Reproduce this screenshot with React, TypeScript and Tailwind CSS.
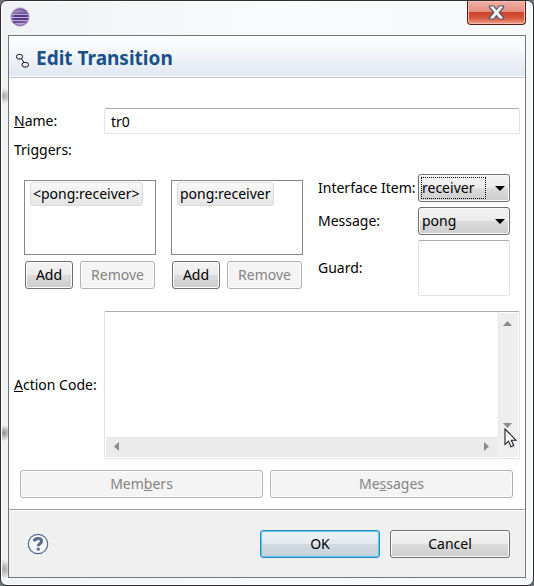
import type { ReactNode } from "react";

const raised =
  "h-7 rounded-[3px] border border-[#707070] bg-[linear-gradient(#f3f3f3,#ebebeb_50%,#dcdcdc_50%,#cdcdcd)] text-black shadow-[inset_0_0_0_1px_#fcfcfc]";
const disabledButton =
  "h-7 rounded-[3px] border border-[#adb2b5] bg-[#f4f4f4] text-[#838383] shadow-[inset_0_0_0_1px_#fcfcfc]";
const field =
  "rounded-[2px] border border-[#e2e3ea] border-t-[#abadb3] bg-white outline-none resize-none";

function TriggerList({ item, label }: { item: string; label: string }) {
  return (
    <div className="w-[132px] shrink-0 pt-1.5">
      <ul aria-label={label} className="h-[75px] border border-[#828790] bg-white px-[5px] py-px">
        <li className="inline-flex h-6 items-center rounded-[3px] border border-[#dcdcdc] bg-linear-to-b from-[#f8f8f8] to-[#e5e5e5] px-[2px] whitespace-nowrap">
          {item}
        </li>
      </ul>
      <div className="mt-1.5 flex justify-between px-px">
        <button type="button" className={`${raised} w-12`}>Add</button>
        <button type="button" disabled className={`${disabledButton} w-[75px]`}>Remove</button>
      </div>
    </div>
  );
}

function DropDown({ id, value, focused }: { id: string; value: string; focused?: boolean }) {
  return (
    <div className="relative">
      <select id={id} defaultValue={value} className={`${raised} block w-full appearance-none pl-[3px] outline-none`}>
        <option>{value}</option>
      </select>
      {focused && (
        <span className="pointer-events-none absolute top-[3px] bottom-[3px] left-[3px] right-6 border border-dotted border-black" />
      )}
      <svg className="pointer-events-none absolute top-3 right-[5px]" width="10" height="5" viewBox="0 0 10 5" aria-hidden="true">
        <path d="M0 0h10L5 5z" fill="#000" />
      </svg>
    </div>
  );
}

function ScrollArrow({ label, className, children }: { label: string; className: string; children: ReactNode }) {
  return (
    <button type="button" aria-label={label} className={`flex items-center justify-center ${className}`}>
      <svg width="9" height="9" viewBox="0 0 9 9" fill="#8b8b8b">{children}</svg>
    </button>
  );
}

function EclipseLogo() {
  return (
    <svg width="20" height="20" viewBox="0 0 20 20" aria-hidden="true">
      <defs>
        <linearGradient id="orb" x1="0" y1="0" x2="1" y2="1">
          <stop offset="0" stopColor="#a793c6" />
          <stop offset="0.5" stopColor="#66498f" />
          <stop offset="1" stopColor="#8f72b6" />
        </linearGradient>
      </defs>
      <circle cx="10" cy="10" r="9.3" fill="url(#orb)" stroke="#c9bddb" strokeWidth="0.7" />
      <path d="M2 5.5Q10 .5 18 5.5z" fill="#a791c4" opacity="0.7" />
      <path d="M2 7h16v1H2zM1 10h18v1H1zM2 13h16v1H2z" fill="#bfaed6" />
      <path d="M4 8h13v2H4zM3 11h15v2H3z" fill="#543a80" />
      <path d="M4 16Q10 20 16 16z" fill="#b6a1d0" />
    </svg>
  );
}

export default function App() {
  return (
    <div className="min-h-screen bg-[#6d7376] font-['Noto_Sans','Open_Sans',sans-serif] text-sm leading-5 text-black">
      <main className="relative flex min-h-screen flex-col rounded-[7px] border border-[#303034] bg-[radial-gradient(7px_8px_at_3px_95px,#a5a5a7,transparent),radial-gradient(7px_8px_at_3px_432px,#8b8b8d,transparent),radial-gradient(7px_10px_at_3px_568px,#a5a5a7,transparent),linear-gradient(to_right,#f1f2f3,#f9fafb_50%,#f7f8fa)] px-[7px] pb-[7px] shadow-[inset_0_0_0_1px_#fff]">
        <header className="flex h-[34px] items-start justify-between pl-0.5">
          <div className="pt-1.5">
            <EclipseLogo />
          </div>
          <button
            type="button"
            aria-label="Close"
            className="flex h-6 w-[59px] items-center justify-center rounded-b-[4px] border border-t-0 border-[#541e19] bg-[linear-gradient(#efb0a5,#e28e80_48%,#cd402a_50%,#d6593f_75%,#f0a28c)] shadow-[inset_0_0_0_1px_#f5bdb0]"
          >
            <svg width="17" height="15" viewBox="0 0 17 15" aria-hidden="true">
              <path d="M1.5 1h4.3l2.7 3.4L11.2 1h4.3v1.5l-4.2 5 4.2 5V14h-4.3l-2.7-3.4L5.8 14H1.5v-1.5l4.2-5-4.2-5z" fill="#f2f2f2" stroke="#535666" strokeWidth="1.2" strokeLinejoin="round" />
            </svg>
          </button>
        </header>

        <div className="flex flex-1 flex-col border border-[#747679] bg-white">
          <div className="flex h-[42px] items-center border-b border-[#b9c6da] bg-linear-to-b from-white to-[#e1e8f2] pt-0.5 pl-[7px] shadow-[inset_0_-1px_0_#fff]">
            <svg className="mt-1.5 mr-1.5" width="14" height="16" viewBox="0 0 14 16" fill="none" stroke="#111" aria-hidden="true">
              <rect x="0.5" y="1.5" width="6" height="4.5" rx="2.2" />
              <rect x="6" y="9.500" width="6.5" height="4.500" rx="2.2" />
              <path d="M5.500 5.800L8 9.500" />
            </svg>
            <h1 className="text-[19px] font-bold text-[#18508c]">Edit Transition</h1>
          </div>

          <form id="transition" className="flex flex-1 flex-col px-[5px] pt-[30px] pb-[11px]">
            <div className="flex items-center">
              <label htmlFor="name" className="w-[90px] shrink-0"><u>N</u>ame:</label>
              <input id="name" defaultValue="tr0" className={`${field} h-[26px] min-w-0 flex-1 px-1.5`} />
            </div>
            <h2 className="mt-1.5">Triggers:</h2>
            <div className="mt-3.5 flex px-2.5">
              <TriggerList label="Triggers" item="<pong:receiver>" />
              <div className="w-[15px] shrink-0" />
              <TriggerList label="Message pairs" item="pong:receiver" />
              <div className="ml-[15px] grid flex-1 grid-cols-[100px_1fr] items-center gap-y-[5px] whitespace-nowrap">
                <label htmlFor="item">Interface Item:</label>
                <DropDown id="item" value="receiver" focused />
                <label htmlFor="message">Message:</label>
                <DropDown id="message" value="pong" />
                <label htmlFor="guard">Guard:</label>
                <textarea id="guard" className={`${field} block h-14 w-full`} />
              </div>
            </div>
            <div className="mt-[15px] flex flex-1 items-center">
              <label htmlFor="action" className="w-[90px] shrink-0 whitespace-nowrap"><u>A</u>ction Code:</label>
              <div className={`${field} grid min-h-[148px] min-w-0 flex-1 grid-cols-[1fr_20px] grid-rows-[1fr_20px] self-stretch p-px`}>
                <textarea id="action" className="block h-full w-full resize-none p-1 outline-none" />
                <div className="flex flex-col justify-between border-l border-[#e6e6e6] bg-[#eeeeee] pr-0.5">
                  <ScrollArrow label="Scroll up" className="h-5 w-full"><path d="M0 7h9L4.500 2z" /></ScrollArrow>
                  <ScrollArrow label="Scroll down" className="h-6 w-full"><path d="M0 2h9L4.500 7z" /></ScrollArrow>
                </div>
                <div className="flex justify-between border-t border-[#e6e6e6] bg-[#ebebeb] pb-0.5">
                  <ScrollArrow label="Scroll left" className="h-full w-5"><path d="M7 0v9L2 4.500z" /></ScrollArrow>
                  <ScrollArrow label="Scroll right" className="h-full w-6"><path d="M2 0v9l5-4.500z" /></ScrollArrow>
                </div>
                <div className="bg-[#f0f0f0]" />
              </div>
            </div>
            <div className="mt-[11px] flex gap-[7px] pr-[7px] pl-1.5">
              <button type="button" disabled className={`${disabledButton} flex-1`}>Mem<u>b</u>ers</button>
              <button type="button" disabled className={`${disabledButton} flex-1`}>Me<u>s</u>sages</button>
            </div>
          </form>

          <footer className="flex h-[68px] shrink-0 items-center border-t border-[#a0a0a0] bg-[#f0f0f0] pr-[15px] pl-[18px] shadow-[inset_0_1px_0_#fff]">
            <button type="button" aria-label="Help" className="mr-auto">
              <svg width="22" height="22" viewBox="0 0 22 22" fill="none" stroke="#566b91" aria-hidden="true">
                <circle cx="11" cy="11" r="9.7" fill="#f7f8fa" strokeWidth="1.2" />
                <path d="M7.200 8.400C7.400 6 9 5.400 11 5.400c2.200 0 3.600 1 3.600 2.800 0 2.500-3.400 2.500-3.400 5" strokeWidth="3" />
                <path d="M9.700 14.800h3v2.700h-3z" fill="#566b91" stroke="none" />
              </svg>
            </button>
            <button type="submit" form="transition" className="h-7 w-[120px] rounded-[3px] border border-[#3c7fb1] bg-[linear-gradient(#edf2f5,#e4eaee_48%,#d3dce2_50%,#c4cfd7)] shadow-[inset_0_0_0_1px_#48d1fa]">OK</button>
            <button type="button" className={`${raised} ml-2.5 w-[120px]`}>Cancel</button>
          </footer>
        </div>

        <svg className="pointer-events-none absolute right-4 bottom-[137px]" width="13" height="20" viewBox="0 0 13 20" aria-hidden="true">
          <path d="M1 1v15.500l3.600-3.400 2.400 5.600 2.700-1.200-2.400-5.300h4.600z" fill="#fff" stroke="#1d1f2b" strokeWidth="1.100" />
        </svg>
      </main>
    </div>
  );
}
